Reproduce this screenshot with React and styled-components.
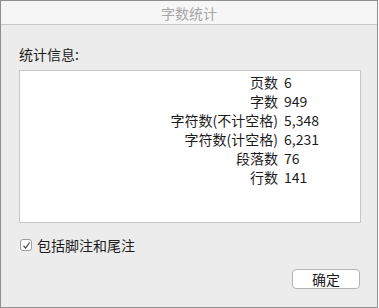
import React from 'react'
import styled, { createGlobalStyle } from 'styled-components'

const GlobalStyle = createGlobalStyle`
  html, body {
    margin: 0;
    padding: 0;
    background: #ffffff;
  }
  * {
    box-sizing: border-box;
  }
`

const Window = styled.div`
  width: 378px;
  height: 308px;
  border: 1px solid #8f8f8f;
  background: #ececec;
  display: flex;
  flex-direction: column;
  font-family: 'Noto Sans CJK SC', 'Noto Sans', sans-serif;
  font-size: 14px;
  color: #1c1c1c;
`

const TitleBar = styled.div`
  height: 24px;
  flex-shrink: 0;
  background: #f6f6f6;
  border-bottom: 1px solid #c9c9c9;
  display: flex;
  align-items: center;
  justify-content: center;
  color: #a6a6a6;
`

const Body = styled.div`
  padding: 20px 16px 0 18px;
  display: flex;
  flex-direction: column;
`

const Heading = styled.div`
  line-height: 18px;
  margin-bottom: 7px;
`

const StatsBox = styled.div`
  width: 342px;
  height: 153px;
  background: #ffffff;
  border: 1px solid #c6c6c6;
  padding-top: 2px;
  display: grid;
  grid-template-columns: 258px auto;
  grid-auto-rows: 19px;
  column-gap: 6px;
  align-content: start;
  line-height: 19px;
`

const Label = styled.div`
  text-align: right;
  white-space: nowrap;
`

const Value = styled.div`
  white-space: nowrap;
`

const CheckRow = styled.label`
  margin-top: 13px;
  height: 18px;
  display: flex;
  align-items: center;
  gap: 5px;
  padding-left: 1px;
`

const CheckBox = styled.span`
  width: 12px;
  height: 12px;
  border: 1px solid #9d9d9d;
  border-radius: 3px;
  background: #fff;
  display: flex;
  align-items: center;
  justify-content: center;
`

const Footer = styled.div`
  margin-top: 15px;
  display: flex;
  justify-content: flex-end;
  padding-right: 1px;
`

const Button = styled.button`
  width: 68px;
  height: 20px;
  border: 1px solid #b3b3b3;
  border-radius: 4px;
  background: #ffffff;
  font-family: inherit;
  font-size: 14px;
  color: #1c1c1c;
  padding: 0;
  line-height: 18px;
`

const stats = [
  ['页数', '6'],
  ['字数', '949'],
  ['字符数(不计空格)', '5,348'],
  ['字符数(计空格)', '6,231'],
  ['段落数', '76'],
  ['行数', '141'],
]

const App = () => (
  <>
    <GlobalStyle />
    <Window>
      <TitleBar>字数统计</TitleBar>
      <Body>
        <Heading>统计信息:</Heading>
        <StatsBox>
          {stats.map(([label, value]) => (
            <React.Fragment key={label}>
              <Label>{label}</Label>
              <Value>{value}</Value>
            </React.Fragment>
          ))}
        </StatsBox>
        <CheckRow>
          <CheckBox>
            <svg width="9" height="9" viewBox="0 0 9 9">
              <path d="M1.5 4.8 L3.6 7 L7.6 1.5" fill="none" stroke="#444" strokeWidth="1.2" />
            </svg>
          </CheckBox>
          包括脚注和尾注
        </CheckRow>
        <Footer>
          <Button>确定</Button>
        </Footer>
      </Body>
    </Window>
  </>
)

export default App
